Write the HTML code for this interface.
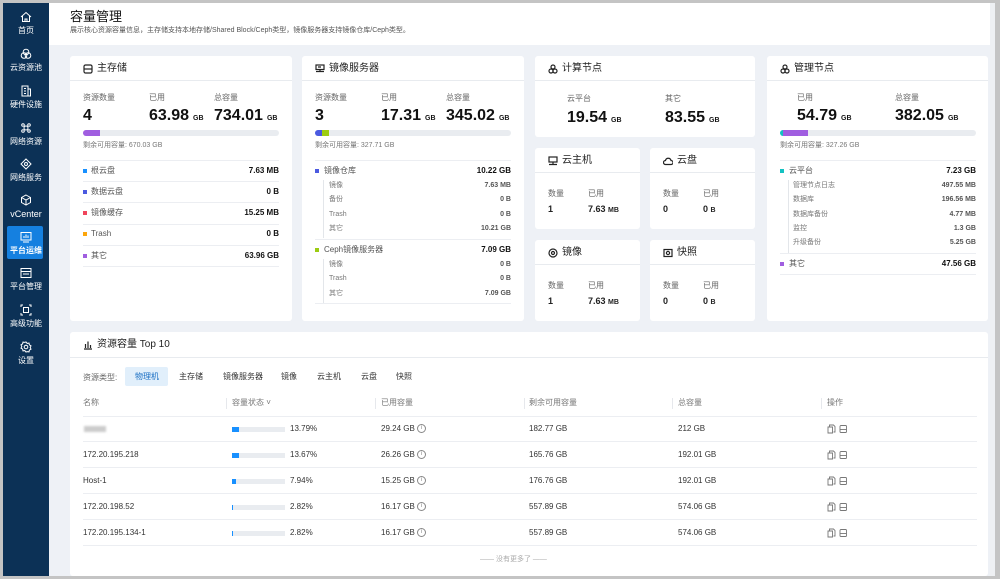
<!DOCTYPE html>
<html><head><meta charset="utf-8">
<style>
*{margin:0;padding:0;box-sizing:border-box}
body{width:1000px;height:579px;overflow:hidden;background:#c4c4c4;font-family:"Liberation Sans","Noto Sans CJK SC",sans-serif;color:#222;position:relative;line-height:1.2}
.a{position:absolute;white-space:nowrap;line-height:1.2}
#side{position:absolute;left:3px;top:3px;width:46px;height:573px;background:#0c3156}
#main{position:absolute;left:49px;top:3px;width:941px;height:573px;background:#eef1f6}
#hdr{position:absolute;left:49px;top:3px;width:941px;height:42px;background:#fff}
#sb{position:absolute;left:990px;top:3px;width:5px;height:573px;background:#eef0f3}
.card{position:absolute;background:#fff;border-radius:3px}
.ch{position:absolute;left:0;right:0;top:0;height:25px;border-bottom:1px solid #e8ebef;font-size:10px;line-height:12px;padding:7px 0 0 27px;color:#222}
.ch svg{position:absolute;left:13px;top:8px}
.lab{font-size:8px;color:#666}
.big{font-size:16px;font-weight:bold;color:#111}
.big small{font-size:7px;font-weight:bold;margin-left:4px}
.bar{position:absolute;height:6px;background:#e9ecf0;border-radius:3px;overflow:hidden}
.rem{font-size:7px;color:#777}
.hl{position:absolute;height:1px;background:#eceef2}
.row{font-size:8px;color:#555}
.val{font-size:8px;font-weight:bold;color:#111;text-align:right}
.sub{font-size:7px;color:#777}
.sv{font-size:7px;color:#555;font-weight:bold;text-align:right}
.dot{position:absolute;width:4px;height:4px}
.si{position:absolute;left:0;width:46px;text-align:center;color:#fff;font-size:8px;line-height:10px}
.si svg{display:block;margin:0 auto 3px}
.td{font-size:8px;color:#333}
.th{font-size:8px;color:#777}
</style></head><body>
<div id="side"></div>
<div id="main"></div>
<div id="hdr"></div>
<div id="sb"></div>

<!-- sidebar -->
<div class="a" style="left:7px;top:226px;width:36px;height:33px;background:#1580e0;border-radius:2px"></div>
<div class="si" style="left:3px;top:11px"><svg width="12" height="12" viewBox="0 0 12 12" fill="none" stroke="#fff" stroke-width="1"><path d="M1 6L6 1.5 11 6M2.5 5v5.5h7V5M5 10.5V8h2v2.5"/></svg>首页</div>
<div class="si" style="left:3px;top:48px"><svg width="12" height="12" viewBox="0 0 12 12" fill="none" stroke="#fff" stroke-width="1"><circle cx="6" cy="4" r="2.8"/><circle cx="4" cy="7.5" r="2.8"/><circle cx="8" cy="7.5" r="2.8"/></svg>云资源池</div>
<div class="si" style="left:3px;top:85px"><svg width="12" height="12" viewBox="0 0 12 12" fill="none" stroke="#fff" stroke-width="1"><rect x="2" y="1" width="6" height="10"/><rect x="8" y="4" width="2.5" height="7"/><path d="M4 3.5h2M4 6h2M4 8.5h2"/></svg>硬件设施</div>
<div class="si" style="left:3px;top:122px"><svg width="12" height="12" viewBox="0 0 12 12" fill="none" stroke="#fff" stroke-width="1"><circle cx="6" cy="6" r="2"/><circle cx="3" cy="3" r="1.3"/><circle cx="9" cy="3" r="1.3"/><circle cx="3" cy="9" r="1.3"/><circle cx="9" cy="9" r="1.3"/></svg>网络资源</div>
<div class="si" style="left:3px;top:158px"><svg width="12" height="12" viewBox="0 0 12 12" fill="none" stroke="#fff" stroke-width="1"><path d="M6 1L11 6 6 11 1 6Z"/><circle cx="6" cy="6" r="1.5"/></svg>网络服务</div>
<div class="si" style="left:3px;top:194px;font-size:9px"><svg width="12" height="12" viewBox="0 0 12 12" fill="none" stroke="#fff" stroke-width="1"><path d="M6 1l4.5 2.5v5L6 11 1.5 8.5v-5zM1.5 3.5L6 6l4.5-2.5M6 6v5"/></svg>vCenter</div>
<div class="si" style="left:3px;top:231px;font-weight:bold"><svg width="12" height="12" viewBox="0 0 12 12" fill="none" stroke="#fff" stroke-width="1"><rect x="1" y="1.5" width="10" height="7.5"/><path d="M4 7V5M6 7V3.5M8 7V4.5M3 11h6"/></svg>平台运维</div>
<div class="si" style="left:3px;top:267px"><svg width="12" height="12" viewBox="0 0 12 12" fill="none" stroke="#fff" stroke-width="1"><rect x="1" y="1.5" width="10" height="9"/><path d="M1 4.5h10M3 7h6"/></svg>平台管理</div>
<div class="si" style="left:3px;top:304px"><svg width="12" height="12" viewBox="0 0 12 12" fill="none" stroke="#fff" stroke-width="1"><path d="M1 3V1h2M9 1h2v2M11 9v2H9M3 11H1V9"/><rect x="3.5" y="3.5" width="5" height="5"/></svg>高级功能</div>
<div class="si" style="left:3px;top:341px"><svg width="12" height="12" viewBox="0 0 12 12" fill="none" stroke="#fff" stroke-width="1"><circle cx="6" cy="6" r="1.8"/><path d="M6 1l1.2 1.4 1.8-.3.4 1.8 1.6.9-.8 1.7.8 1.7-1.6.9-.4 1.8-1.8-.3L6 11 4.8 9.6 3 9.9l-.4-1.8L1 7.2 1.8 5.5 1 3.8l1.6-.9L3 1.1l1.8.3z"/></svg>设置</div>

<!-- header -->
<div class="a" style="left:70px;top:9px;font-size:13px;color:#111">容量管理</div>
<div class="a" style="left:70px;top:27px;font-size:7px;color:#555">展示核心资源容量信息，主存储支持本地存储/Shared Block/Ceph类型，镜像服务器支持镜像仓库/Ceph类型。</div>

<!-- card 1 -->
<div class="card" style="left:70px;top:56px;width:222px;height:265px">
<div class="ch"><svg width="10" height="10" viewBox="0 0 10 10" fill="none" stroke="#222" stroke-width="1.2"><rect x="1" y="1" width="8" height="8" rx="1.5"/><path d="M1 5h8"/></svg>主存储</div>
<div class="a lab" style="left:13px;top:37px">资源数量</div>
<div class="a lab" style="left:79px;top:37px">已用</div>
<div class="a lab" style="left:144px;top:37px">总容量</div>
<div class="a big" style="left:13px;top:50px">4</div>
<div class="a big" style="left:79px;top:50px">63.98<small>GB</small></div>
<div class="a big" style="left:144px;top:50px">734.01<small>GB</small></div>
<div class="bar" style="left:13px;top:74px;width:196px"><div style="width:17px;height:6px;background:#a05ee0"></div></div>
<div class="a rem" style="left:13px;top:86px">剩余可用容量: 670.03 GB</div>
<div class="hl" style="left:13px;top:104px;width:196px"></div>
</div>
<!-- card1 rows -->
<div class="dot" style="left:83px;top:169px;background:#1890ff"></div><div class="a row" style="left:91px;top:166px">根云盘</div><div class="a val" style="left:200px;width:79px;top:166px">7.63 MB</div>
<div class="hl" style="left:83px;top:181px;width:196px"></div>
<div class="dot" style="left:83px;top:190px;background:#4b5ae0"></div><div class="a row" style="left:91px;top:187px">数据云盘</div><div class="a val" style="left:200px;width:79px;top:187px">0 B</div>
<div class="hl" style="left:83px;top:202px;width:196px"></div>
<div class="dot" style="left:83px;top:211px;background:#f0455b"></div><div class="a row" style="left:91px;top:208px">镜像缓存</div><div class="a val" style="left:200px;width:79px;top:208px">15.25 MB</div>
<div class="hl" style="left:83px;top:224px;width:196px"></div>
<div class="dot" style="left:83px;top:232px;background:#fca60b"></div><div class="a row" style="left:91px;top:229px">Trash</div><div class="a val" style="left:200px;width:79px;top:229px">0 B</div>
<div class="hl" style="left:83px;top:245px;width:196px"></div>
<div class="dot" style="left:83px;top:254px;background:#a05ee0"></div><div class="a row" style="left:91px;top:251px">其它</div><div class="a val" style="left:200px;width:79px;top:251px">63.96 GB</div>
<div class="hl" style="left:83px;top:266px;width:196px"></div>

<!-- card 2 -->
<div class="card" style="left:302px;top:56px;width:222px;height:265px">
<div class="ch"><svg width="10" height="10" viewBox="0 0 10 10" fill="none" stroke="#222" stroke-width="1.2"><rect x="1" y="1" width="8" height="4.5"/><path d="M1 7.5h8M3 3h3M5 5.5v2"/></svg>镜像服务器</div>
<div class="a lab" style="left:13px;top:37px">资源数量</div>
<div class="a lab" style="left:79px;top:37px">已用</div>
<div class="a lab" style="left:144px;top:37px">总容量</div>
<div class="a big" style="left:13px;top:50px">3</div>
<div class="a big" style="left:79px;top:50px">17.31<small>GB</small></div>
<div class="a big" style="left:144px;top:50px">345.02<small>GB</small></div>
<div class="bar" style="left:13px;top:74px;width:196px"><div style="float:left;width:7px;height:6px;background:#4b5ae0"></div><div style="float:left;width:7px;height:6px;background:#9ccc12"></div></div>
<div class="a rem" style="left:13px;top:86px">剩余可用容量: 327.71 GB</div>
<div class="hl" style="left:13px;top:104px;width:196px"></div>
<div class="dot" style="left:13px;top:113px;background:#4b5ae0"></div><div class="a row" style="left:22px;top:110px">镜像仓库</div><div class="a val" style="left:130px;width:79px;top:110px">10.22 GB</div>
<div class="a" style="left:21px;top:124px;width:1px;height:58px;background:#e3e6ea"></div>
<div class="a sub" style="left:27px;top:126px">镜像</div><div class="a sv" style="left:130px;width:79px;top:126px">7.63 MB</div>
<div class="a sub" style="left:27px;top:140px">备份</div><div class="a sv" style="left:130px;width:79px;top:140px">0 B</div>
<div class="a sub" style="left:27px;top:155px">Trash</div><div class="a sv" style="left:130px;width:79px;top:155px">0 B</div>
<div class="a sub" style="left:27px;top:169px">其它</div><div class="a sv" style="left:130px;width:79px;top:169px">10.21 GB</div>
<div class="hl" style="left:13px;top:183px;width:196px"></div>
<div class="dot" style="left:13px;top:192px;background:#9ccc12"></div><div class="a row" style="left:22px;top:189px">Ceph镜像服务器</div><div class="a val" style="left:130px;width:79px;top:189px">7.09 GB</div>
<div class="a" style="left:21px;top:203px;width:1px;height:44px;background:#e3e6ea"></div>
<div class="a sub" style="left:27px;top:205px">镜像</div><div class="a sv" style="left:130px;width:79px;top:205px">0 B</div>
<div class="a sub" style="left:27px;top:219px">Trash</div><div class="a sv" style="left:130px;width:79px;top:219px">0 B</div>
<div class="a sub" style="left:27px;top:234px">其它</div><div class="a sv" style="left:130px;width:79px;top:234px">7.09 GB</div>
<div class="hl" style="left:13px;top:247px;width:196px"></div>
</div>

<!-- compute -->
<div class="card" style="left:535px;top:56px;width:220px;height:81px">
<div class="ch"><svg width="10" height="10" viewBox="0 0 10 10" fill="none" stroke="#222" stroke-width="1.2"><circle cx="5" cy="3" r="2"/><circle cx="3" cy="7" r="2"/><circle cx="7" cy="7" r="2"/></svg>计算节点</div>
<div class="a lab" style="left:32px;top:38px">云平台</div>
<div class="a lab" style="left:130px;top:38px">其它</div>
<div class="a big" style="left:32px;top:52px">19.54<small>GB</small></div>
<div class="a big" style="left:130px;top:52px">83.55<small>GB</small></div>
</div>

<!-- small cards -->
<div class="card" style="left:535px;top:148px;width:105px;height:81px">
<div class="ch"><svg width="10" height="10" viewBox="0 0 10 10" fill="none" stroke="#222" stroke-width="1.2"><rect x="1" y="1" width="8" height="5"/><path d="M1 8.5h8M5 6v2.5"/></svg>云主机</div>
<div class="a lab" style="left:13px;top:41px">数量</div><div class="a lab" style="left:53px;top:41px">已用</div>
<div class="a" style="left:13px;top:56px;font-size:9px;font-weight:bold">1</div>
<div class="a" style="left:53px;top:56px;font-size:9px;font-weight:bold">7.63 <span style="font-size:7px">MB</span></div>
</div>
<div class="card" style="left:650px;top:148px;width:105px;height:81px">
<div class="ch"><svg width="10" height="10" viewBox="0 0 10 10" fill="none" stroke="#222" stroke-width="1.2"><path d="M2.5 8.5a2 2 0 0 1 0-4A2.8 2.8 0 0 1 8 4.5a2 2 0 0 1 0 4z"/></svg>云盘</div>
<div class="a lab" style="left:13px;top:41px">数量</div><div class="a lab" style="left:53px;top:41px">已用</div>
<div class="a" style="left:13px;top:56px;font-size:9px;font-weight:bold">0</div>
<div class="a" style="left:53px;top:56px;font-size:9px;font-weight:bold">0 <span style="font-size:7px">B</span></div>
</div>
<div class="card" style="left:535px;top:240px;width:105px;height:81px">
<div class="ch"><svg width="10" height="10" viewBox="0 0 10 10" fill="none" stroke="#222" stroke-width="1.2"><circle cx="5" cy="5" r="4"/><circle cx="5" cy="5" r="1.5"/></svg>镜像</div>
<div class="a lab" style="left:13px;top:41px">数量</div><div class="a lab" style="left:53px;top:41px">已用</div>
<div class="a" style="left:13px;top:56px;font-size:9px;font-weight:bold">1</div>
<div class="a" style="left:53px;top:56px;font-size:9px;font-weight:bold">7.63 <span style="font-size:7px">MB</span></div>
</div>
<div class="card" style="left:650px;top:240px;width:105px;height:81px">
<div class="ch"><svg width="10" height="10" viewBox="0 0 10 10" fill="none" stroke="#222" stroke-width="1.2"><rect x="1" y="1.5" width="8" height="7"/><circle cx="5" cy="5" r="1.6"/></svg>快照</div>
<div class="a lab" style="left:13px;top:41px">数量</div><div class="a lab" style="left:53px;top:41px">已用</div>
<div class="a" style="left:13px;top:56px;font-size:9px;font-weight:bold">0</div>
<div class="a" style="left:53px;top:56px;font-size:9px;font-weight:bold">0 <span style="font-size:7px">B</span></div>
</div>

<!-- mgmt -->
<div class="card" style="left:767px;top:56px;width:221px;height:265px">
<div class="ch"><svg width="10" height="10" viewBox="0 0 10 10" fill="none" stroke="#222" stroke-width="1.2"><circle cx="5" cy="3" r="2"/><circle cx="3" cy="7" r="2"/><circle cx="7" cy="7" r="2"/></svg>管理节点</div>
<div class="a lab" style="left:30px;top:37px">已用</div>
<div class="a lab" style="left:128px;top:37px">总容量</div>
<div class="a big" style="left:30px;top:50px">54.79<small>GB</small></div>
<div class="a big" style="left:128px;top:50px">382.05<small>GB</small></div>
<div class="bar" style="left:13px;top:74px;width:196px"><div style="float:left;width:3px;height:6px;background:#13c2c2"></div><div style="float:left;width:25px;height:6px;background:#a05ee0"></div></div>
<div class="a rem" style="left:13px;top:86px">剩余可用容量: 327.26 GB</div>
<div class="hl" style="left:13px;top:104px;width:196px"></div>
<div class="dot" style="left:13px;top:113px;background:#13c2c2"></div><div class="a row" style="left:22px;top:110px">云平台</div><div class="a val" style="left:130px;width:79px;top:110px">7.23 GB</div>
<div class="a" style="left:21px;top:124px;width:1px;height:73px;background:#e3e6ea"></div>
<div class="a sub" style="left:26px;top:126px">管理节点日志</div><div class="a sv" style="left:130px;width:79px;top:126px">497.55 MB</div>
<div class="a sub" style="left:26px;top:140px">数据库</div><div class="a sv" style="left:130px;width:79px;top:140px">196.56 MB</div>
<div class="a sub" style="left:26px;top:155px">数据库备份</div><div class="a sv" style="left:130px;width:79px;top:155px">4.77 MB</div>
<div class="a sub" style="left:26px;top:169px">监控</div><div class="a sv" style="left:130px;width:79px;top:169px">1.3 GB</div>
<div class="a sub" style="left:26px;top:183px">升级备份</div><div class="a sv" style="left:130px;width:79px;top:183px">5.25 GB</div>
<div class="hl" style="left:13px;top:197px;width:196px"></div>
<div class="dot" style="left:13px;top:206px;background:#a05ee0"></div><div class="a row" style="left:22px;top:203px">其它</div><div class="a val" style="left:130px;width:79px;top:203px">47.56 GB</div>
<div class="hl" style="left:13px;top:218px;width:196px"></div>
</div>

<!-- bottom -->
<div class="card" style="left:70px;top:332px;width:918px;height:244px">
<div class="ch" style="height:26px"><svg width="10" height="10" viewBox="0 0 10 10" fill="none" stroke="#222" stroke-width="1.2"><path d="M1 9h8M2.5 8V4M5 8V1.5M7.5 8V5"/></svg>资源容量 Top 10</div>
<div class="a th" style="left:13px;top:41px;color:#666">资源类型:</div>
<div class="a" style="left:55px;top:35px;width:43px;height:19px;background:#e1effb;border-radius:2px"></div>
<div class="a" style="left:65px;top:40px;font-size:8px;color:#1a6fc4">物理机</div>
<div class="a td" style="left:109px;top:40px">主存储</div>
<div class="a td" style="left:153px;top:40px">镜像服务器</div>
<div class="a td" style="left:211px;top:40px">镜像</div>
<div class="a td" style="left:247px;top:40px">云主机</div>
<div class="a td" style="left:291px;top:40px">云盘</div>
<div class="a td" style="left:326px;top:40px">快照</div>
<div class="a th" style="left:13px;top:66px">名称</div>
<div class="a" style="left:156px;top:66px;width:1px;height:11px;background:#e6e8ec"></div>
<div class="a th" style="left:162px;top:66px">容量状态 ˅</div>
<div class="a" style="left:305px;top:66px;width:1px;height:11px;background:#e6e8ec"></div>
<div class="a th" style="left:311px;top:66px">已用容量</div>
<div class="a" style="left:454px;top:66px;width:1px;height:11px;background:#e6e8ec"></div>
<div class="a th" style="left:459px;top:66px">剩余可用容量</div>
<div class="a" style="left:602px;top:66px;width:1px;height:11px;background:#e6e8ec"></div>
<div class="a th" style="left:608px;top:66px">总容量</div>
<div class="a" style="left:751px;top:66px;width:1px;height:11px;background:#e6e8ec"></div>
<div class="a th" style="left:757px;top:66px">操作</div>
<div class="hl" style="left:13px;top:84px;width:894px"></div>
<div class="a" style="left:410px;top:224px;font-size:7px;color:#aaa">—— 没有更多了 ——</div>
</div>

<!-- table rows -->
<div id="rows"></div>
<script>
var d=[["\u00a0",13.79,"29.24 GB","182.77 GB","212 GB"],["172.20.195.218",13.67,"26.26 GB","165.76 GB","192.01 GB"],["Host-1",7.94,"15.25 GB","176.76 GB","192.01 GB"],["172.20.198.52",2.82,"16.17 GB","557.89 GB","574.06 GB"],["172.20.195.134-1",2.82,"16.17 GB","557.89 GB","574.06 GB"]];
var h="";
d.forEach(function(r,i){var y=424+i*26;
h+='<div class="a td" style="left:83px;top:'+y+'px">'+r[0]+'</div>';
if(i==0)h+='<div class="a" style="left:84px;top:'+(y+2)+'px;width:22px;height:6px;background:#ccc;filter:blur(1px)"></div>';
h+='<div class="a" style="left:232px;top:'+(y+3)+'px;width:53px;height:5px;background:#e9ecf0"><div style="width:'+Math.max(1,r[1]/100*53)+'px;height:5px;background:#1890ff"></div></div>';
h+='<div class="a td" style="left:290px;top:'+y+'px">'+r[1].toFixed(2)+'%</div>';
h+='<div class="a td" style="left:381px;top:'+y+'px">'+r[2]+'</div>';
h+='<div class="a" style="left:417px;top:'+(y)+'px;width:9px;height:9px;border:1px solid #888;border-radius:50%;font-size:6px;color:#888;text-align:center;line-height:7px">i</div>';
h+='<div class="a td" style="left:529px;top:'+y+'px">'+r[3]+'</div>';
h+='<div class="a td" style="left:678px;top:'+y+'px">'+r[4]+'</div>';
h+='<svg class="a" style="left:827px;top:'+y+'px" width="20" height="10" viewBox="0 0 20 10" fill="none" stroke="#777" stroke-width="0.9"><path d="M2.5 2.5V1h4l1.5 1.5V8H6.5M1 3h4.5v6H1z"/><rect x="13" y="1.5" width="6.5" height="7" rx="1"/><path d="M13 5.5h6.5"/></svg>';
h+='<div class="hl" style="left:83px;top:'+(y+17)+'px;width:894px"></div>';
});
document.getElementById("rows").innerHTML=h;
</script>
</body></html>
